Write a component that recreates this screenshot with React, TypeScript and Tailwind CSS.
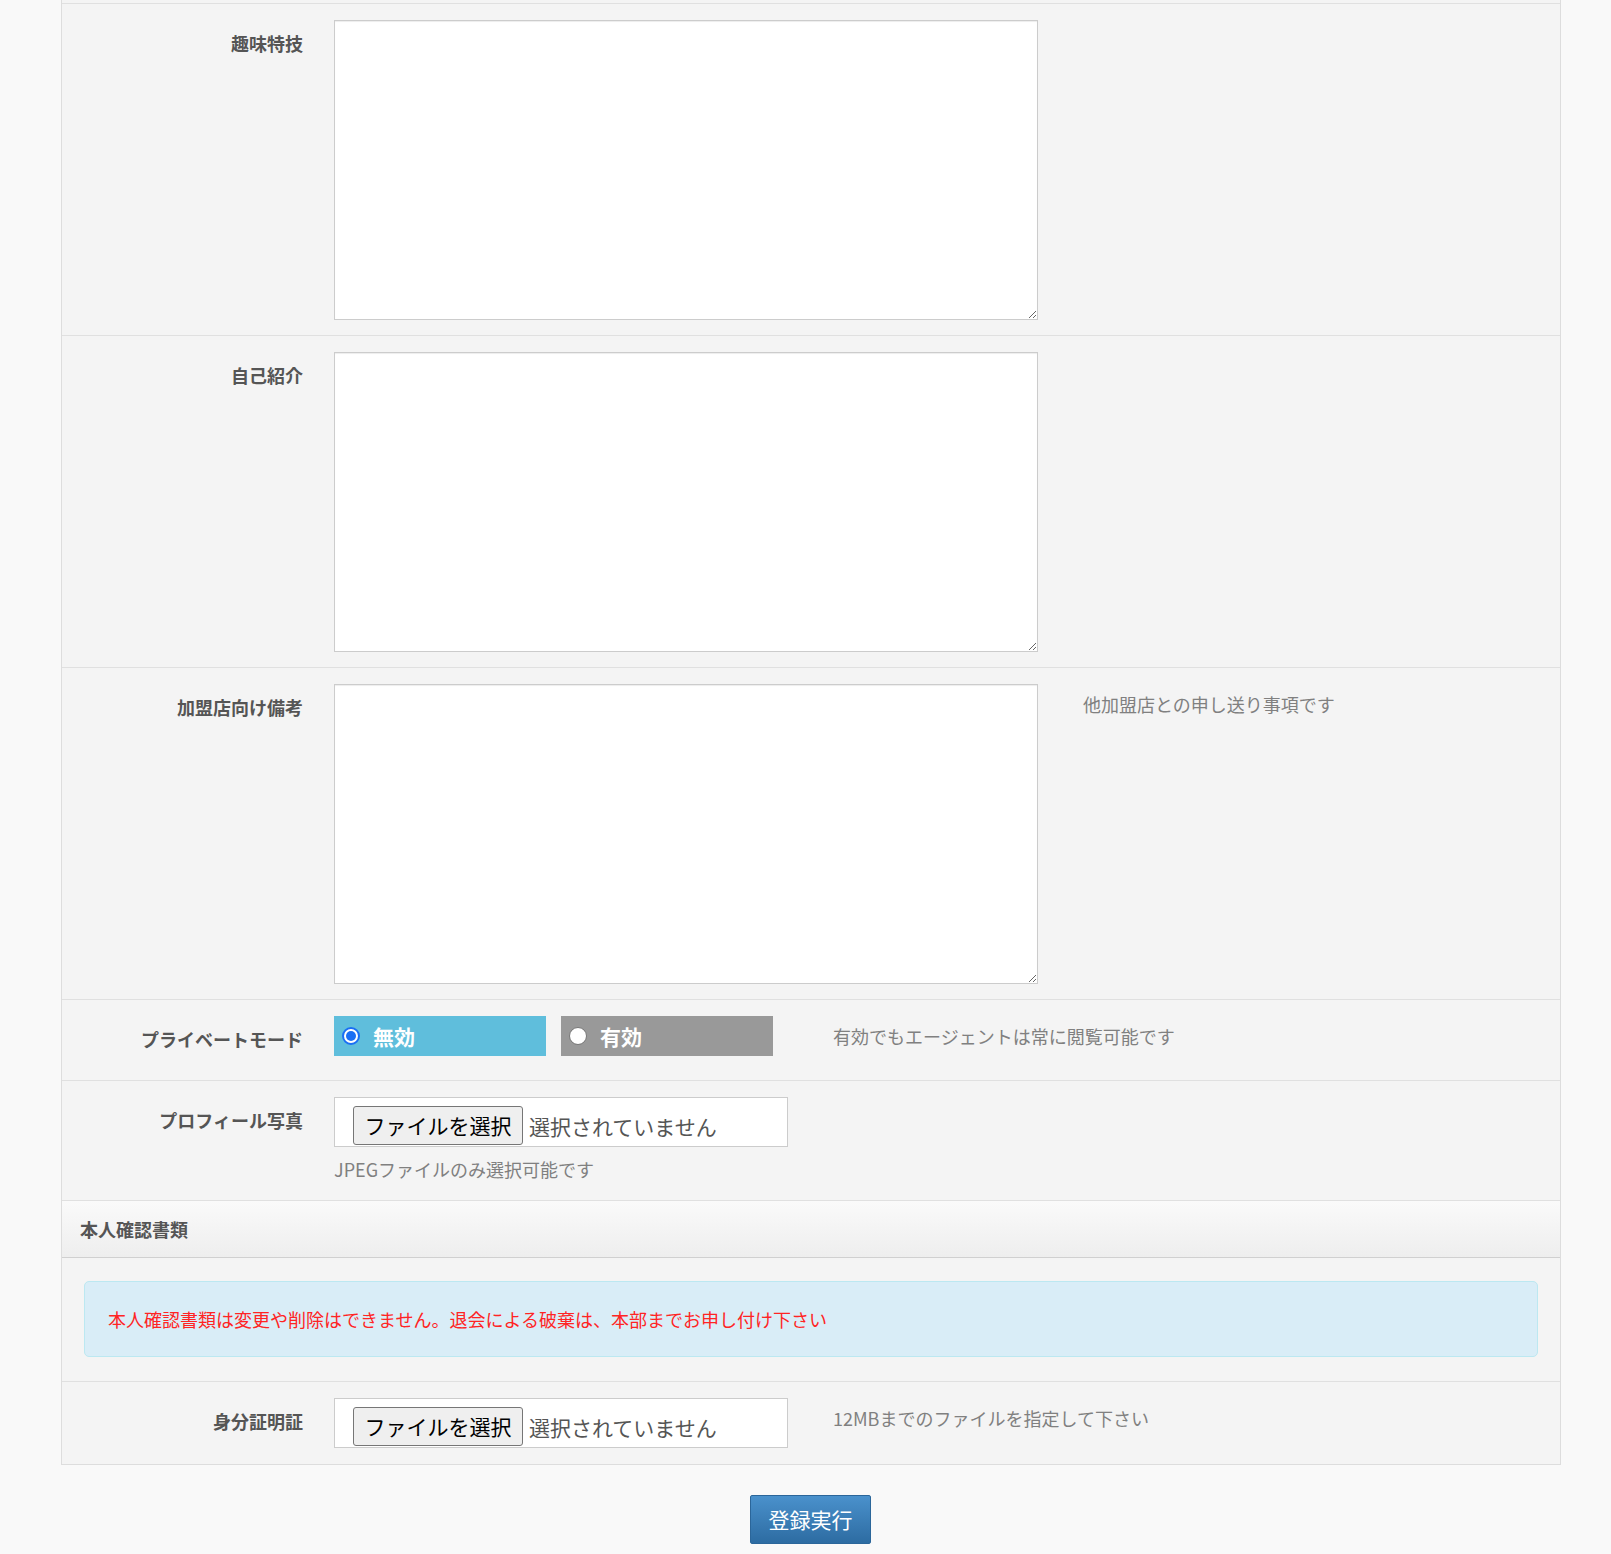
import type { ReactNode } from 'react'

const font = "font-['Noto_Sans_CJK_JP','Noto_Sans',sans-serif]"

function Row({ label, children, pb = 'pb-[15px]' }: { label: string; children: ReactNode; pb?: string }) {
  return (
    <div className={`flex border-t border-[#e0e0e0] pt-4 ${pb}`}>
      <div className="w-[241px] shrink-0 pt-[11px] text-right text-[18px] leading-[25px] font-bold text-[#555]">
        {label}
      </div>
      <div className="ml-[31px] flex items-start">{children}</div>
    </div>
  )
}

function Hint({ children, className = '' }: { children: ReactNode; className?: string }) {
  return <p className={`pt-[8px] text-[18px] leading-[25px] text-[#808080] ${className}`}>{children}</p>
}

function Memo() {
  return (
    <textarea className="block h-[300px] w-[704px] resize border border-[#cccccc] bg-white shadow-[inset_0_1px_1px_rgba(0,0,0,0.075)] outline-none" />
  )
}

function FilePicker() {
  return (
    <div className="flex h-[50px] w-[454px] items-end border border-[#cccccc] bg-white pl-[18px]">
      <div className="mb-px flex h-[39px] w-[170px] items-center justify-center rounded-[3px] border border-[#767676] bg-[#efefef] text-[21px] text-black">
        ファイルを選択
      </div>
      <span className="mb-[3px] ml-[6px] text-[21px] leading-[34px] text-[#555]">選択されていません</span>
    </div>
  )
}

function RadioBox({ label, checked }: { label: string; checked?: boolean }) {
  return (
    <label
      className={`flex h-[40px] w-[212px] items-center pl-[8px] text-[21px] font-bold text-white ${
        checked ? 'bg-[#5fbedc]' : 'bg-[#999999]'
      }`}
    >
      {checked ? (
        <span className="flex h-[18px] w-[18px] items-center justify-center rounded-full border-[2px] border-[#1a6ff4] bg-white">
          <span className="h-[10px] w-[10px] rounded-full bg-[#1a6ff4]" />
        </span>
      ) : (
        <span className="h-[18px] w-[18px] rounded-full border border-[#767676] bg-white" />
      )}
      <span className="ml-[13px] leading-[25px]">{label}</span>
    </label>
  )
}

export default function App() {
  return (
    <div className={`min-h-[1554px] bg-[#f9f9f9] pb-[11px] ${font}`}>
      <div className="ml-[61px] w-[1500px] border-x border-b border-[#dddddd] bg-[#f4f4f4]">
        <div className="h-[3px]" />

        <Row label="趣味特技">
          <Memo />
        </Row>

        <Row label="自己紹介">
          <Memo />
        </Row>

        <Row label="加盟店向け備考">
          <Memo />
          <Hint className="ml-[45px]">他加盟店との申し送り事項です</Hint>
        </Row>

        <div className="flex border-t border-[#e0e0e0] pt-4 pb-[24px]">
          <div className="w-[241px] shrink-0 pt-[11px] text-right text-[18px] leading-[25px] font-bold text-[#555]">
            プライベートモード
          </div>
          <div className="ml-[31px] flex items-start">
            <RadioBox label="無効" checked />
            <div className="ml-[15px]">
              <RadioBox label="有効" />
            </div>
            <Hint className="ml-[60px]">有効でもエージェントは常に閲覧可能です</Hint>
          </div>
        </div>

        <div className="flex border-t border-[#e0e0e0] pt-4 pb-[18px]">
          <div className="w-[241px] shrink-0 pt-[11px] text-right text-[18px] leading-[25px] font-bold text-[#555]">
            プロフィール写真
          </div>
          <div className="ml-[31px]">
            <FilePicker />
            <p className="mt-[10px] text-[18px] leading-[25px] text-[#808080]">JPEGファイルのみ選択可能です</p>
          </div>
        </div>

        <div className="flex h-[58px] items-center border-t border-b border-t-[#e0e0e0] border-b-[#d0d0d0] bg-gradient-to-b from-[#fafafa] to-[#eeeeee] pl-[18px] text-[18px] font-bold text-[#555]">
          本人確認書類
        </div>

        <div className="px-[22px] pt-[23px] pb-[24px]">
          <div className="rounded-[5px] border border-[#bce8f1] bg-[#d9edf7] px-[23px] py-[24px] text-[18px] leading-[26px] text-[#ff2424]">
            本人確認書類は変更や削除はできません。退会による破棄は、本部までお申し付け下さい
          </div>
        </div>

        <Row label="身分証明証" pb="pb-[16px]">
          <FilePicker />
          <Hint className="ml-[45px]">12MBまでのファイルを指定して下さい</Hint>
        </Row>
      </div>

      <div className="mt-[30px] flex justify-center pl-[10px]">
        <button className="h-[49px] w-[121px] rounded-[2px] border border-[#2b669a] bg-gradient-to-b from-[#4a91cc] to-[#2d6ca2] text-[21px] text-white">
          登録実行
        </button>
      </div>
    </div>
  )
}
